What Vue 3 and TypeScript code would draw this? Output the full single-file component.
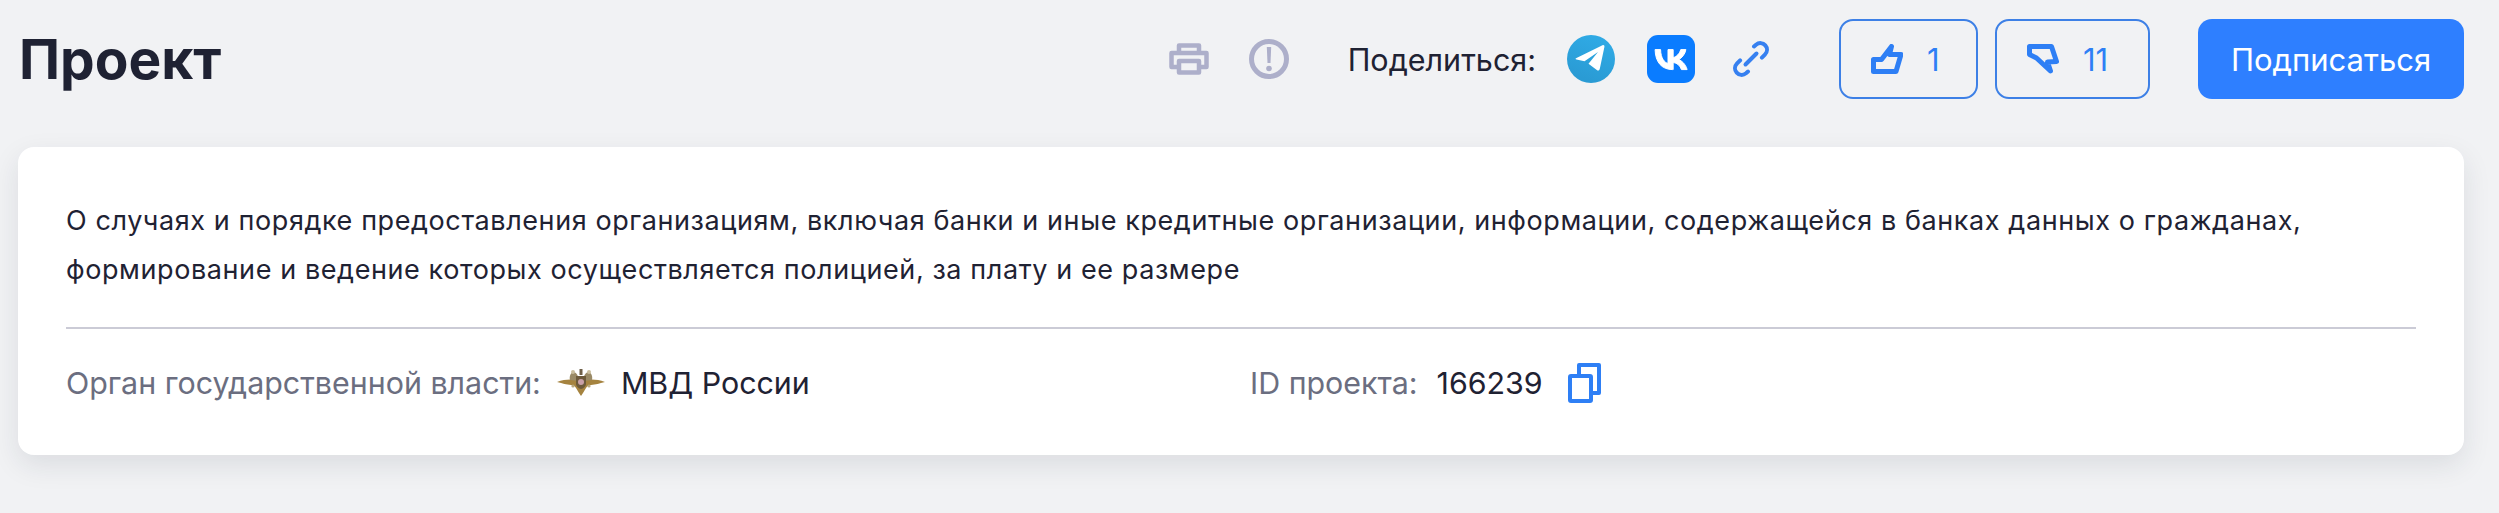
<script setup lang="ts">
const title = 'Проект'
const description =
  'О случаях и порядке предоставления организациям, включая банки и иные кредитные организации, информации, содержащейся в банках данных о гражданах, формирование и ведение которых осуществляется полицией, за плату и ее размере'
</script>

<template>
  <main class="page">
    <header class="head">
      <h1 class="title">{{ title }}</h1>
      <div class="tools">
        <svg class="print" width="40" height="32" viewBox="0 0 40 32" fill="none" stroke="#adafca" stroke-width="4.500" stroke-linejoin="round">
          <path d="M10 9V2.500h20V9" />
          <path d="M10 24H2.500V10h35v14H30" />
          <rect x="10" y="18" width="20" height="11.500" />
        </svg>
        <svg class="alert" width="40" height="40" viewBox="0 0 40 40">
          <circle cx="20" cy="20" r="17.500" fill="none" stroke="#adafca" stroke-width="5" />
          <path d="M17.800 8h4.400l-.7 16h-3z" fill="#adafca" />
          <circle cx="20" cy="29.500" r="2.800" fill="#adafca" />
        </svg>
        <span class="share-label">Поделиться:</span>
        <svg class="tg" width="48" height="48" viewBox="0 0 48 48">
          <defs>
            <linearGradient id="tgGrad" x1="0.650" y1="0.100" x2="0.350" y2="0.900">
              <stop offset="0" stop-color="#2fa9e4" />
              <stop offset="1" stop-color="#2a9bd4" />
            </linearGradient>
          </defs>
          <circle cx="24" cy="24" r="24" fill="url(#tgGrad)" />
          <path d="M9 23.200 35.500 10.200c1.200-.5 2.200.2 1.900 1.700L32.800 33.700c-.4 1.800-1.700 2.200-3 1.200L21.500 28.800 31 17 17.500 26.300 9.500 24.600c-1-.3-1.200-1-.5-1.400z" fill="#fff" />
        </svg>
        <svg class="vk" width="48" height="48" viewBox="0 0 48 48">
          <rect width="48" height="48" rx="11" fill="#0a7cff" />
          <path d="M25.540 34.580c-10.940 0-17.180-7.500-17.440-19.980h5.480c.18 9.160 4.220 13.040 7.420 13.840V14.600h5.160v7.900c3.160-.34 6.480-3.940 7.600-7.900h5.160c-.86 4.880-4.460 8.480-7.020 9.960 2.560 1.200 6.660 4.340 8.220 10.020h-5.680c-1.220-3.800-4.260-6.740-8.280-7.140v7.140h-.62z" fill="#fff" stroke="#fff" stroke-width="1" />
        </svg>
        <svg class="link" width="36" height="36" viewBox="0 0 36 36" fill="none" stroke="#3680f0" stroke-width="4" stroke-linecap="round">
          <path d="M21 5.500l2-1.800c3-2.400 7-2 9.300.6 2.400 2.700 2.200 6.700-.4 9.300l-3 3" />
          <path d="M15 30.500l-2 1.800c-3 2.400-7 2-9.300-.6-2.400-2.700-2.200-6.700.4-9.300l3-3" />
          <path d="M12.500 23.500l11-11" />
        </svg>
        <button class="vote vote-up" type="button">
          <svg width="32" height="30" viewBox="0 0 32 30" fill="none" stroke="#2e7ff5" stroke-width="5" stroke-linejoin="round" stroke-linecap="round">
            <path d="M2.500 27.500V15.500h8L20.500 2.500l-2 8H30L25 27.500z" />
          </svg>
          <span>1</span>
        </button>
        <button class="vote vote-down" type="button">
          <svg width="32" height="30" viewBox="0 0 32 30" fill="none" stroke="#2e7ff5" stroke-width="5" stroke-linejoin="round" stroke-linecap="round">
            <path d="M2.500 2.500h22l5 15-9 .5 3 9-14-13-7-3.500z" />
          </svg>
          <span>11</span>
        </button>
        <button class="subscribe" type="button">Подписаться</button>
      </div>
    </header>

    <section class="card">
      <p class="desc">{{ description }}</p>
      <div class="meta">
        <div class="meta-authority">
          <span class="meta-label">Орган государственной власти:</span>
          <svg class="emblem" width="48" height="28" viewBox="0 0 48 28">
            <path d="M0 13c7-2.500 13-3 19-2l5 2 5-2c6-1 12-.5 19 2-6 1.500-9 2.500-14 3-2 .2-4 1-5 3l-3 5-2 3-2-3-3-5c-1-2-3-2.800-5-3-5-.5-8-1.500-14-3z" fill="#a5833f" />
            <path d="M13 11c-1-4 1-8 4-8 3 1 5 5 5 9zM35 11c1-4-1-8-4-8-3 1-5 5-5 9z" fill="#9a8a66" />
            <rect x="22.500" y="0" width="3" height="6" fill="#6f6048" />
            <circle cx="16" cy="3" r="2" fill="#c9bd9d" />
            <circle cx="32" cy="3" r="2" fill="#c9bd9d" />
            <circle cx="16" cy="17" r="1.600" fill="#b8a77e" />
            <circle cx="32" cy="17" r="1.600" fill="#b8a77e" />
            <path d="M19 7h10v8c0 2-3 5-5 5s-5-3-5-5z" fill="#6d5a3a" />
            <circle cx="24" cy="13" r="3" fill="#c9a0a8" />
          </svg>
          <span class="meta-value">МВД России</span>
        </div>
        <div class="meta-id">
          <span class="meta-label">ID проекта:</span>
          <span class="meta-value">166239</span>
          <svg class="copy" width="33" height="40" viewBox="0 0 33 40" fill="none" stroke="#2e7ff5" stroke-width="4" stroke-linejoin="round">
            <path d="M11 11V2h20v28h-8" />
            <rect x="2" y="13" width="21" height="25" rx="1" />
          </svg>
        </div>
      </div>
    </section>
  </main>
</template>

<style scoped>
.page {
  box-sizing: border-box;
  width: 2499px;
  height: 513px;
  padding: 19px 35px 0 18px;
  background: #f1f2f4;
  font-family: Inter, "Noto Sans", sans-serif;
  color: #1f2233;
  overflow: hidden;
}
.head {
  display: flex;
  justify-content: space-between;
  align-items: center;
  height: 80px;
}
.title {
  margin: 0 0 0 1px;
  font-size: 55px;
  font-weight: 700;
  line-height: 1;
  color: #1f2233;
}
.tools {
  display: flex;
  align-items: center;
}
.tools svg { flex: none; display: block; }
.alert { margin-left: 40px; }
.share-label {
  margin-left: 59px;
  font-size: 30.5px;
  color: #1f2233;
}
.tg { margin-left: 31px; }
.vk { margin-left: 32px; }
.link { margin-left: 38px; }
.vote {
  box-sizing: border-box;
  display: flex;
  align-items: center;
  height: 80px;
  padding: 0 0 0 30px;
  gap: 24px;
  border: 2px solid #3d80e6;
  border-radius: 14px;
  background: transparent;
  color: #2e7ff5;
  font: 400 31px Inter, sans-serif;
}
.vote-up { width: 139px; margin-left: 70px; }
.vote-down { width: 155px; margin-left: 17px; }
.subscribe {
  width: 266px;
  height: 80px;
  margin-left: 48px;
  border: 0;
  border-radius: 14px;
  background: #2e7fff;
  color: #fff;
  font: 400 31px Inter, sans-serif;
}
.card {
  box-sizing: border-box;
  height: 308px;
  margin-top: 48px;
  padding: 49px 48px 0 48px;
  background: #fff;
  border-radius: 16px;
  box-shadow: 0 10px 28px rgba(30, 35, 60, 0.1);
}
.desc {
  margin: 0;
  padding-bottom: 33px;
  font-size: 27px;
  line-height: 49px;
  letter-spacing: 0.59px;
  color: #1f2233;
  border-bottom: 2px solid #cbcbd6;
}
.meta {
  display: flex;
  align-items: center;
  height: 107px;
  font-size: 30.4px;
}
.meta-authority {
  display: flex;
  align-items: center;
  width: 1184px;
}
.meta-id {
  display: flex;
  align-items: center;
}
.meta-label { color: #6b6e80; }
.meta-value { color: #1f2233; }
.emblem { margin: 0 16px; flex: none; }
.meta-id .meta-value { margin-left: 19px; }
.copy { margin-left: 25px; flex: none; }
</style>
